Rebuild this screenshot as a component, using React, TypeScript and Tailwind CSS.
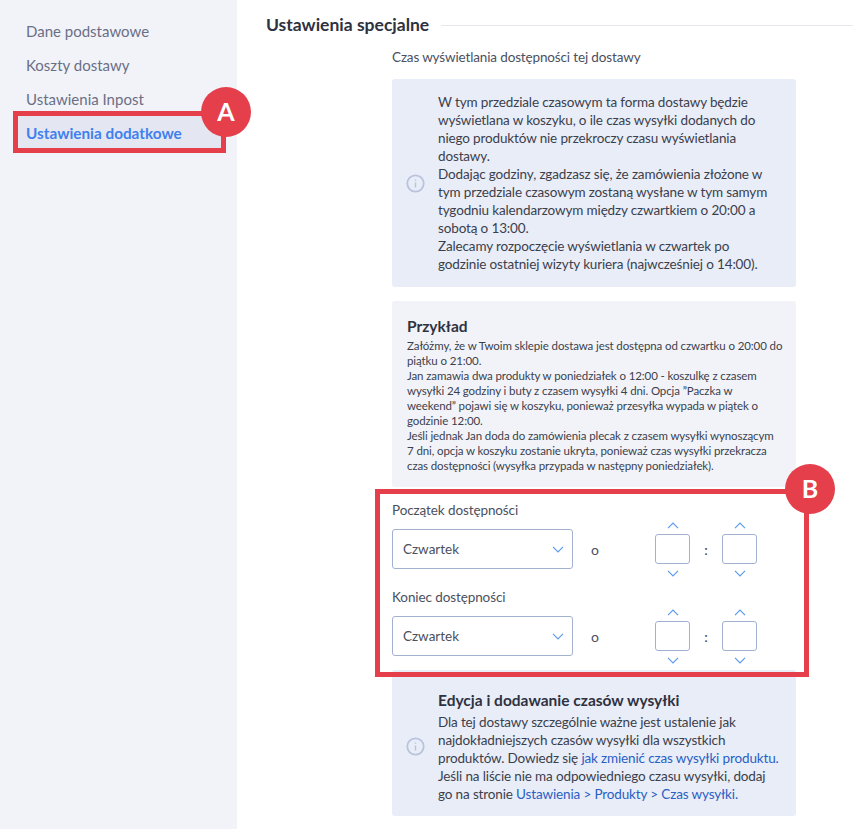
import React from "react";

function Info() {
  return (
    <svg width="19" height="19" viewBox="0 0 19 19" fill="none" className="shrink-0">
      <circle cx="9.5" cy="9.5" r="8.2" stroke="#b9c3dc" strokeWidth="1.8" />
      <path d="M9.5 8.5v5M9.5 5.4v1.4" stroke="#b9c3dc" strokeWidth="1.4" />
    </svg>
  );
}

function Chevron({ up = false }: { up?: boolean }) {
  return (
    <svg width="12" height="7" viewBox="0 0 12 7" fill="none">
      <path d={up ? "M1 6.2L6 1.2L11 6.2" : "M1 .8L6 5.8L11 .8"} stroke="#5a9bf0" strokeWidth="1.2" />
    </svg>
  );
}

function Spinner() {
  return (
    <div className="flex flex-col items-center w-[35px]">
      <div className="h-[10px] flex items-center justify-center"><Chevron up /></div>
      <div className="w-[35px] h-[30px] my-[4px] rounded-[3px] border border-[#a3b1d1] bg-white" />
      <div className="h-[10px] flex items-center justify-center"><Chevron /></div>
    </div>
  );
}

function TimeRow({ label }: { label: string }) {
  return (
    <div>
      <div className="text-[13.5px] tracking-[-0.1px] leading-[18px] text-[#4b5060] h-[18px]">{label}</div>
      <div className="flex items-center mt-[10px] h-[40px]">
        <div className="w-[181px] h-[40px] rounded-[3px] border border-[#a3b1d1] bg-white flex items-center justify-between pl-[10px] pr-[8px] text-[13.5px] text-[#4b5060]">
          <span>Czwartek</span>
          <Chevron />
        </div>
        <span className="ml-[18px] w-[64px] text-[14px] text-[#4b5060]">o</span>
        <Spinner />
        <span className="w-[32px] text-center text-[14px] font-semibold text-[#4b5060]">:</span>
        <Spinner />
      </div>
    </div>
  );
}

export default function App() {
  return (
    <div
      className="relative flex w-[853px] h-[829px] overflow-hidden bg-white text-[#3b3f4c]"
      style={{ fontFamily: 'Lato, "Noto Sans", sans-serif' }}
    >
      <aside className="w-[237px] shrink-0 bg-[#f2f3f9] pt-[14px] pl-[14px] pr-[12px]">
        {["Dane podstawowe", "Koszty dostawy", "Ustawienia Inpost"].map((t) => (
          <div key={t} className="h-[34px] pl-[12px] flex items-center text-[15px] text-[#6a6f85]">{t}</div>
        ))}
        <div className="relative h-[34px] pl-[12px] flex items-center text-[15.3px] font-bold text-[#3f7fee] bg-[#e4e7f1]">
          Ustawienia dodatkowe
          <div className="absolute left-[-1px] top-[-5px] w-[213px] h-[42px] border-[5px] border-[#e43f4a]" />
          <div className="absolute left-[187px] top-[-29px] w-[50px] h-[50px] rounded-full bg-[#e43f4a] flex items-center justify-center text-white text-[25px] font-bold">A</div>
        </div>
      </aside>

      <main className="flex-1 pl-[29px] pt-[13px]">
        <div className="flex items-center h-[24px]">
          <h2 className="text-[17.5px] font-bold text-[#2e3240] leading-[24px]">Ustawienia specjalne</h2>
          <div className="flex-1 h-px bg-[#e6e8ee] ml-[12px]" />
        </div>

        <section className="ml-[126px] w-[404px] mt-[11px]">
          <div className="text-[13.5px] tracking-[-0.14px] leading-[18px] text-[#4b5060] whitespace-nowrap">Czas wyświetlania dostępności tej dostawy</div>

          <div className="mt-[13px] h-[208px] rounded-[3px] bg-[#e9edf8] flex items-center pl-[14px] pr-[12px]">
            <Info />
            <p className="ml-[13px] text-[13.5px] tracking-[-0.14px] leading-[18px] text-[#3b3f4c] whitespace-nowrap">
              W tym przedziale czasowym ta forma dostawy będzie<br />
              wyświetlana w koszyku, o ile czas wysyłki dodanych do<br />
              niego produktów nie przekroczy czasu wyświetlania<br />
              dostawy.<br />
              Dodając godziny, zgadzasz się, że zamówienia złożone w<br />
              tym przedziale czasowym zostaną wysłane w tym samym<br />
              tygodniu kalendarzowym między czwartkiem o 20:00 a<br />
              sobotą o 13:00.<br />
              Zalecamy rozpoczęcie wyświetlania w czwartek po<br />
              godzinie ostatniej wizyty kuriera (najwcześniej o 14:00).
            </p>
          </div>

          <div className="mt-[14px] h-[186px] rounded-[3px] bg-[#f2f3f9] pl-[15px] pt-[15px]">
            <h3 className="text-[15.5px] leading-[20px] font-bold text-[#2e3240]">Przykład</h3>
            <p className="mt-[2px] text-[11.5px] tracking-[-0.11px] leading-[15px] text-[#3b3f4c] whitespace-nowrap">
              Załóżmy, że w Twoim sklepie dostawa jest dostępna od czwartku o 20:00 do<br />
              piątku o 21:00.<br />
              Jan zamawia dwa produkty w poniedziałek o 12:00 - koszulkę z czasem<br />
              wysyłki 24 godziny i buty z czasem wysyłki 4 dni. Opcja ”Paczka w<br />
              weekend” pojawi się w koszyku, ponieważ przesyłka wypada w piątek o<br />
              godzinie 12:00.<br />
              Jeśli jednak Jan doda do zamówienia plecak z czasem wysyłki wynoszącym<br />
              7 dni, opcja w koszyku zostanie ukryta, ponieważ czas wysyłki przekracza<br />
              czas dostępności (wysyłka przypada w następny poniedziałek).
            </p>
          </div>

          <div className="relative h-[183px] pt-[14px]">
            <div className="flex flex-col gap-[19px]">
              <TimeRow label="Początek dostępności" />
              <TimeRow label="Koniec dostępności" />
            </div>
            <div className="absolute z-10 left-[-17px] top-[2px] w-[434px] h-[188px] border-[5px] border-[#e43f4a]" />
            <div className="absolute z-10 left-[393px] top-[-23px] w-[50px] h-[50px] rounded-full bg-[#e43f4a] flex items-center justify-center text-white text-[25px] font-bold">B</div>
          </div>

          <div className="h-[146px] rounded-[3px] bg-[#e9edf8] flex items-center pl-[14px] pr-[12px] pt-[7px]">
            <Info />
            <div className="ml-[13px] whitespace-nowrap">
              <h3 className="text-[15.5px] leading-[20px] font-bold text-[#2e3240] mb-[3px]">Edycja i dodawanie czasów wysyłki</h3>
              <p className="text-[13.5px] tracking-[-0.14px] leading-[18px] text-[#3b3f4c]">
                Dla tej dostawy szczególnie ważne jest ustalenie jak<br />
                najdokładniejszych czasów wysyłki dla wszystkich<br />
                produktów. Dowiedz się <span className="text-[#2a5fc4]">jak zmienić czas wysyłki produktu.</span><br />
                Jeśli na liście nie ma odpowiedniego czasu wysyłki, dodaj<br />
                go na stronie <span className="text-[#2a5fc4]">Ustawienia &gt; Produkty &gt; Czas wysyłki.</span>
              </p>
            </div>
          </div>
        </section>
      </main>
    </div>
  );
}
